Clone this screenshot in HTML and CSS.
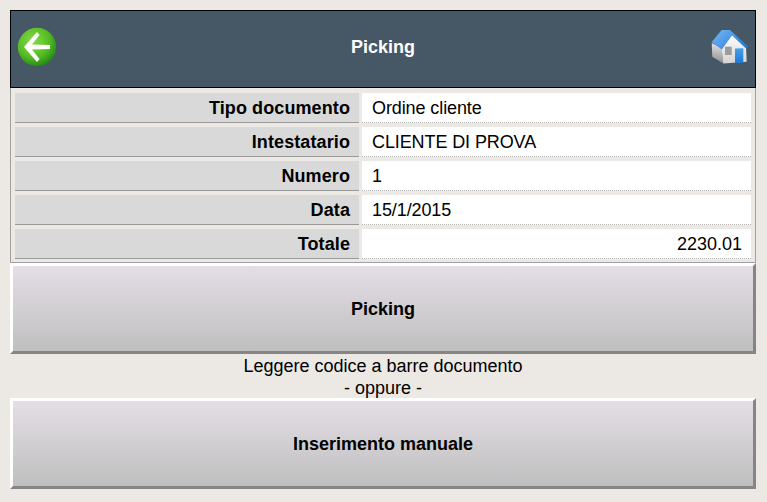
FILE: index.html
```html
<!DOCTYPE html>
<html lang="en">
<head>
    <meta charset="UTF-8">
    <meta name="viewport" content="width=device-width, initial-scale=1.0">
    <title>Picking</title>
    <link rel="stylesheet" href="styles.css">
</head>
<body>
    <div class="page">
        <header class="top-bar">
            <svg class="back-icon" viewBox="0 0 40 40" width="40" height="40">
                <defs>
                    <radialGradient id="backFill" cx="0.4" cy="0.35" r="0.7">
                        <stop offset="0" stop-color="#86dc48"/>
                        <stop offset="0.6" stop-color="#56bb24"/>
                        <stop offset="1" stop-color="#1d8416"/>
                    </radialGradient>
                    <filter id="soft" x="-10%" y="-10%" width="120%" height="120%">
                        <feGaussianBlur stdDeviation="0.5"/>
                    </filter>
                </defs>
                <circle cx="20" cy="20" r="19.2" fill="url(#backFill)" filter="url(#soft)"/>
                <path d="M7 20 L20 5 L22.5 8 L15 17.5 L33 18 L33 22 L15 22.5 L22.5 32 L20 35 Z" fill="#fff" filter="url(#soft)"/>
            </svg>
            <h1>Picking</h1>
            <svg class="home-icon" viewBox="0 0 38 36" width="38" height="36">
                <defs>
                    <linearGradient id="roofFill" x1="0" y1="0" x2="1" y2="0.6">
                        <stop offset="0" stop-color="#75baf7"/>
                        <stop offset="1" stop-color="#2a7cd6"/>
                    </linearGradient>
                    <linearGradient id="sideFill" x1="0" y1="0" x2="0" y2="1">
                        <stop offset="0" stop-color="#e2e2e2"/>
                        <stop offset="1" stop-color="#8e8e8e"/>
                    </linearGradient>
                    <linearGradient id="wallFill" x1="0" y1="0" x2="0" y2="1">
                        <stop offset="0" stop-color="#ffffff"/>
                        <stop offset="1" stop-color="#d4d4d4"/>
                    </linearGradient>
                    <linearGradient id="doorFill" x1="0" y1="0" x2="0" y2="1">
                        <stop offset="0" stop-color="#46a2ee"/>
                        <stop offset="1" stop-color="#1f78d2"/>
                    </linearGradient>
                    <filter id="softHome" x="-5%" y="-5%" width="110%" height="110%">
                        <feGaussianBlur stdDeviation="0.35"/>
                    </filter>
                </defs>
                <g filter="url(#softHome)">
                    <path d="M0.7 14 L10.7 19 L12.3 34.5 L1.3 27.7 Z" fill="url(#sideFill)"/>
                    <path d="M10.7 20 L21 5 L35 17.7 L35.7 32.7 L12.3 34.5 Z" fill="url(#wallFill)"/>
                    <path d="M0.7 13 L10.7 1 L19 1 L37.3 17.7 L35 19.5 L21 6.5 L10.7 20.5 Z" fill="url(#roofFill)"/>
                    <rect x="14" y="17.7" width="6.7" height="8.3" fill="#9c9c9c"/>
                    <path d="M24 19.5 L32.3 19.3 L32.3 33.5 L24 34.3 Z" fill="url(#doorFill)"/>
                </g>
            </svg>
        </header>
        <section class="details">
            <div class="label">Tipo documento</div>
            <div class="value">Ordine cliente</div>
            <div class="label">Intestatario</div>
            <div class="value">CLIENTE DI PROVA</div>
            <div class="label">Numero</div>
            <div class="value">1</div>
            <div class="label">Data</div>
            <div class="value">15/1/2015</div>
            <div class="label">Totale</div>
            <div class="value total">2230.01</div>
        </section>
        <button class="big-button">Picking</button>
        <p class="hint">Leggere codice a barre documento<br>- oppure -</p>
        <button class="big-button">Inserimento manuale</button>
    </div>
</body>
</html>
```
FILE: styles.css
```css
body {
    margin: 0;
    background-color: #ece9e5;
    font-family: "Liberation Sans", Arial, sans-serif;
    color: #000;
}

.page {
    display: flex;
    flex-direction: column;
    padding: 10px 11px 0 10px;
}

.top-bar {
    display: flex;
    align-items: center;
    justify-content: space-between;
    height: 72px;
    padding: 0 6px 4px;
    background-color: #465866;
    border: 1px solid #000;
}

.top-bar h1 {
    margin: 0;
    font-size: 18px;
    font-weight: bold;
    color: #fff;
}

.home-icon {
    margin-left: 2px;
}

.details {
    display: grid;
    grid-template-columns: 344px 389px;
    column-gap: 3px;
    row-gap: 4px;
    padding: 5px 4px 3px;
    border: 1px solid #a0a0a0;
    border-top: 0;
    font-size: 18px;
}

.label {
    display: flex;
    align-items: center;
    justify-content: flex-end;
    height: 27px;
    padding: 2px 9px 0 0;
    background-color: #d9d9d9;
    border-bottom: 1px solid #999;
    font-weight: bold;
    letter-spacing: 0.1px;
}

.value {
    display: flex;
    align-items: center;
    height: 27px;
    padding: 2px 9px 0 10px;
    background-color: #fff;
    border-bottom: 1px dotted #b5b5b5;
    letter-spacing: -0.1px;
}

.total {
    justify-content: flex-end;
    letter-spacing: 0;
}

.big-button {
    height: 91px;
    margin: 0;
    padding: 2px 0 0;
    background: linear-gradient(#e4dee6, #bfbfbf);
    border-style: solid;
    border-width: 3px;
    border-color: #fff #858585 #858585 #fff;
    font-family: inherit;
    font-size: 18px;
    font-weight: bold;
    color: #000;
}

.hint {
    margin: 0 0 -1px;
    padding-top: 1px;
    font-size: 18px;
    line-height: 22px;
    text-align: center;
}
```
